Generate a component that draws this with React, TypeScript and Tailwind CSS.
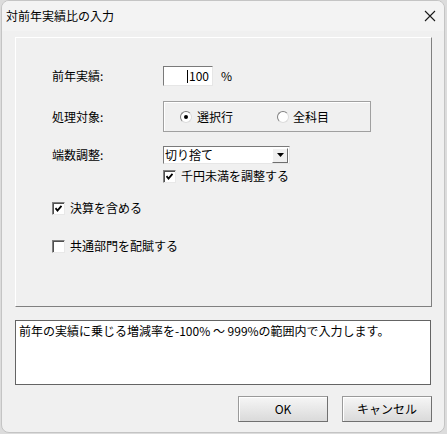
import type { ReactNode } from 'react'

const font = { fontFamily: '"Noto Sans CJK JP", "Liberation Sans", sans-serif' }

function CloseIcon() {
  return (
    <svg viewBox="0 0 12 12" className="h-[12px] w-[12px]" aria-hidden="true">
      <path d="M1 1L11 11M11 1L1 11" stroke="#1a1a1a" strokeWidth={1.1} />
    </svg>
  )
}

function CheckBox({ checked }: { checked: boolean }) {
  return (
    <span className="flex h-[13px] w-[13px] shrink-0 items-center justify-center border border-[#808080] border-r-[#e8e8e8] border-b-[#e8e8e8] bg-white shadow-[inset_1px_1px_0_#505050]">
      {checked && (
        <svg viewBox="0 0 11 11" className="h-[11px] w-[11px]" aria-hidden="true">
          <path d="M2.5 5.2L4.5 7.5L8.5 2.8" fill="none" stroke="#000" strokeWidth={1.8} />
        </svg>
      )}
    </span>
  )
}

function Radio({ checked }: { checked: boolean }) {
  return (
    <span className="flex h-[12px] w-[12px] shrink-0 items-center justify-center rounded-full border border-[#808080] border-r-[#dcdcdc] border-b-[#dcdcdc] bg-white">
      {checked && <span className="h-[4px] w-[4px] rounded-full bg-black" />}
    </span>
  )
}

function Row({ label, children, className = '' }: { label: string; children: ReactNode; className?: string }) {
  return (
    <div className={`flex items-center ${className}`}>
      <span className="w-[111px] shrink-0">{label}</span>
      {children}
    </div>
  )
}

function Button({ children }: { children: ReactNode }) {
  return (
    <button
      type="button"
      className="flex h-[26px] w-[90px] items-center justify-center border border-[#707070] border-t-[#9a9a9a] border-l-[#9a9a9a] bg-gradient-to-b from-[#f6f6f6] to-[#dadada] shadow-[inset_1px_1px_0_#ffffff] text-[12px] text-black"
    >
      {children}
    </button>
  )
}

export default function App() {
  return (
    <div className="flex h-[434px] w-[447px] bg-[#dcdcdc] pl-px text-[12px] text-black" style={font}>
      <div className="flex h-[433px] w-[444px] flex-col overflow-hidden rounded-[8px] border border-[#c4c4c4] bg-[#f0f0f0]">
        <div className="flex h-[30px] shrink-0 items-center justify-between bg-[#f3f3f3] pl-[4px] pr-[8px]">
          <span className="text-[12px]">対前年実績比の入力</span>
          <CloseIcon />
        </div>

        <div className="flex flex-col pl-[13px]">
          <div className="mt-[6px] flex h-[270px] w-[417px] flex-col border border-white border-r-[#808080] border-b-[#808080] pl-[36px] pt-[28px]">
            <Row label="前年実績:">
              <span className="flex h-[20px] w-[50px] items-center justify-end border border-[#7a7a7a] border-r-[#e6e6e6] border-b-[#e6e6e6] bg-white pr-[3px]">
                <span className="mr-[1px] h-[13px] w-px bg-black" />
                <span>100</span>
              </span>
              <span className="ml-[8px]">%</span>
            </Row>

            <Row label="処理対象:" className="mt-[15px]">
              <div className="flex h-[31px] w-[208px] items-center border border-[#a0a0a0] shadow-[inset_1px_1px_0_#ffffff] pl-[16px]">
                <span className="flex w-[97px] items-center gap-[5px]">
                  <Radio checked />
                  <span>選択行</span>
                </span>
                <span className="flex items-center gap-[4px]">
                  <Radio checked={false} />
                  <span>全科目</span>
                </span>
              </div>
            </Row>

            <Row label="端数調整:" className="mt-[14px]">
              <div className="flex h-[18px] w-[127px] items-center justify-between border border-[#7a7a7a] border-r-[#e6e6e6] border-b-[#e6e6e6] bg-white pl-[1px] pr-px">
                <span className="leading-none">切り捨て</span>
                <span className="flex h-[15px] w-[16px] items-center justify-center border border-white border-r-[#6e6e6e] border-b-[#6e6e6e] bg-[#f0f0f0]">
                  <svg viewBox="0 0 7 4" className="h-[4px] w-[7px]" aria-hidden="true">
                    <path d="M0 0H7L3.5 4Z" fill="#000" />
                  </svg>
                </span>
              </div>
            </Row>

            <div className="ml-[111px] mt-[3px] flex items-center gap-[5px]">
              <CheckBox checked />
              <span>千円未満を調整する</span>
            </div>

            <div className="mt-[14px] flex items-center gap-[5px]">
              <CheckBox checked />
              <span>決算を含める</span>
            </div>

            <div className="mt-[20px] flex items-center gap-[5px]">
              <CheckBox checked={false} />
              <span>共通部門を配賦する</span>
            </div>
          </div>

          <div className="mt-[13px] h-[65px] w-[416px] border border-[#646464] bg-white px-[3px] pt-[1px]">
            前年の実績に乗じる増減率を-100% 〜 999%の範囲内で入力します。
          </div>

          <div className="mt-[11px] flex w-[417px] justify-end gap-[14px]">
            <Button>OK</Button>
            <Button>キャンセル</Button>
          </div>
        </div>
      </div>
    </div>
  )
}
